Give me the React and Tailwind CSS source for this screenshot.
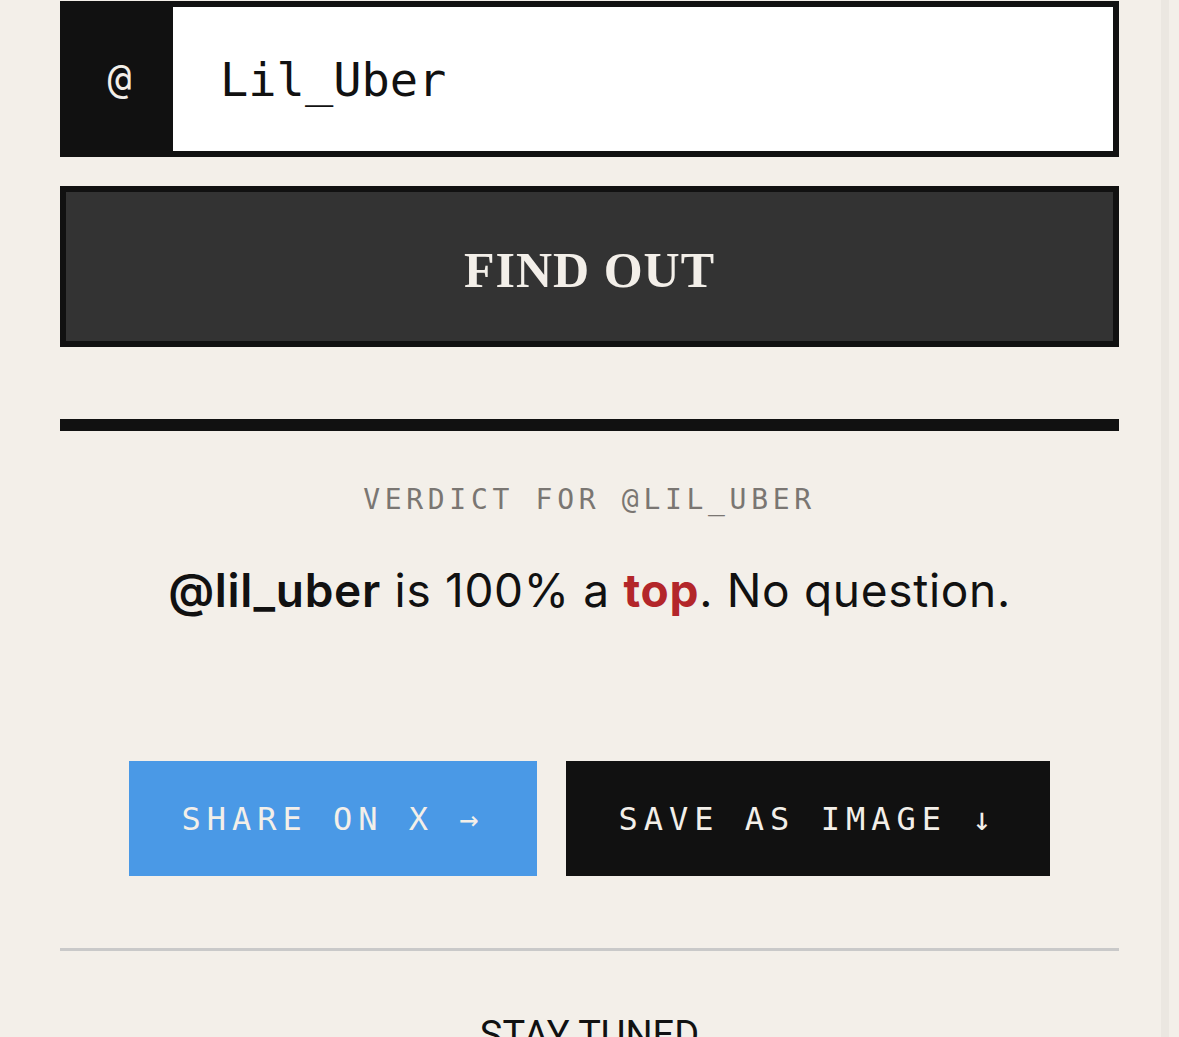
export default function App() {
  const mono = { fontFamily: '"DejaVu Sans Mono", "Liberation Mono", monospace' };
  return (
    <div className="min-h-screen bg-[#f3efe9] flex text-[#111]">
      <div className="pl-[60px] w-[1119px] shrink-0 pt-px">
        <div className="flex h-[156px] border-[6px] border-[#111] bg-white">
          <div
            className="w-[107px] shrink-0 bg-[#111] text-[#f3efe9] flex items-center justify-center text-[40px] leading-none"
            style={mono}
          >
            @
          </div>
          <div className="flex-1 flex items-center pl-[47px] text-[47px] leading-none text-[#111]" style={mono}>
            Lil_Uber
          </div>
        </div>

        <button className="mt-[29px] w-full h-[161px] border-[6px] border-[#111] bg-[#333] flex items-center justify-center pt-[7px]">
          <span className="font-['Liberation_Serif',serif] font-bold text-[50px] leading-none tracking-[0.02em] text-[#f3efe9]">
            FIND OUT
          </span>
        </button>

        <div className="mt-[72px] h-[12px] bg-[#111]" />

        <p
          className="mt-[55px] text-center text-[28px] leading-[28px] tracking-[4.7px] text-[#7a7672]"
          style={mono}
        >
          VERDICT FOR @LIL_UBER
        </p>

        <p className="mt-[53px] text-center font-['Inter',sans-serif] text-[46px] leading-[46px] tracking-[0.015em] text-[#111]">
          <span className="font-semibold">@lil_uber</span> is 100% a{" "}
          <span className="font-bold text-[#b3262a]">top</span>. No question.
        </p>

        <div className="mt-[148px] flex justify-center gap-[29px]">
          <button
            className="w-[408px] h-[115px] bg-[#4a99e6] text-[#f3efe9] flex items-center justify-center text-[32px] leading-none tracking-[6px]"
            style={mono}
          >
            SHARE ON X →
          </button>
          <button
            className="w-[484px] h-[115px] bg-[#111] text-[#f3efe9] flex items-center justify-center text-[32px] leading-none tracking-[6px]"
            style={mono}
          >
            SAVE AS IMAGE ↓
          </button>
        </div>

        <div className="mt-[72px] h-[3px] bg-[#c9c9c9]" />

        <h2 className="mt-[65px] text-center font-['Roboto',sans-serif] text-[38px] leading-[38px] text-[#111]">
          STAY TUNED
        </h2>
      </div>
      <div className="flex-1 flex justify-end">
        <div className="w-[8px] bg-[#ebe7e1]" />
        <div className="w-[10px]" />
      </div>
    </div>
  );
}
